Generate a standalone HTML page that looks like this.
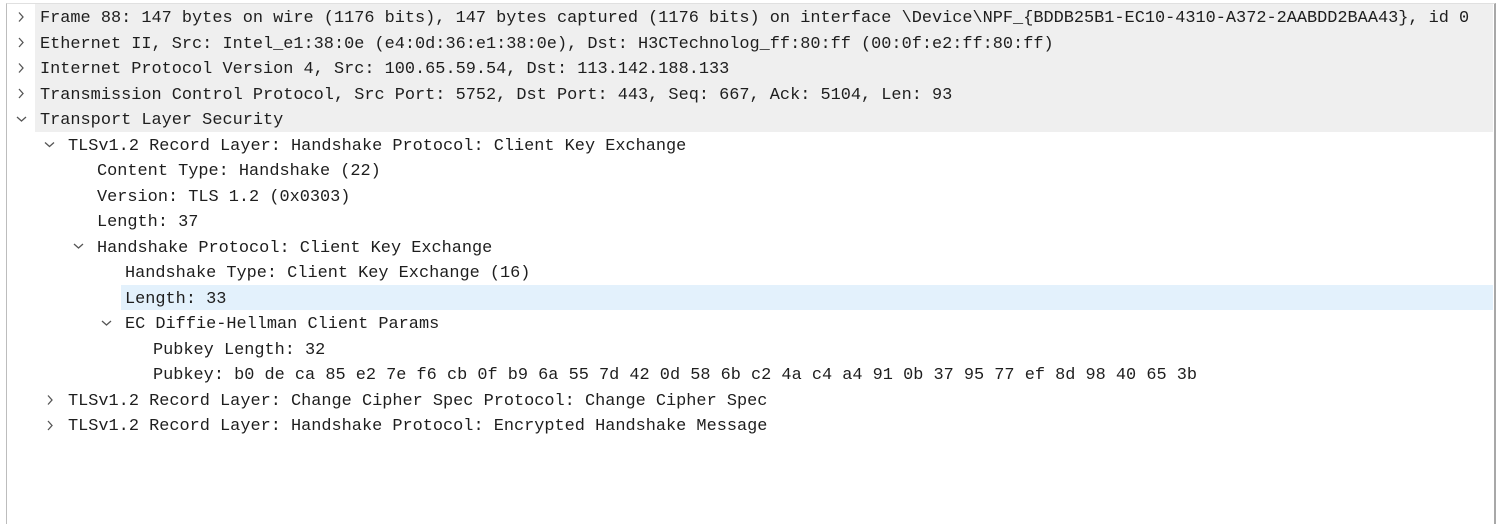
<!DOCTYPE html>
<html><head><meta charset="utf-8"><style>
body{margin:0;width:1496px;height:512px;background:#fff;overflow:hidden;position:relative;font-family:"Liberation Mono",monospace;}
.frame{position:absolute;left:6px;top:3px;width:1487px;height:520px;border-left:1px solid #bdbdbd;border-right:2px solid #a8a8a8;border-top:1px solid #e0e0e0;}
.r{position:absolute;height:25.5px;line-height:25.5px;font-size:16.9px;color:#1e1e1e;white-space:pre;}
.t{margin-top:2px;}
.g{background:#efefef;}
.h{background:#e3f1fc;}
</style></head><body>
<div class="frame"></div>
<div class="r g" style="left:35px;right:3px;top:4px"></div>
<div class="r g" style="left:35px;right:3px;top:29.5px"></div>
<div class="r g" style="left:35px;right:3px;top:55px"></div>
<div class="r g" style="left:35px;right:3px;top:80.5px"></div>
<div class="r g" style="left:35px;right:3px;top:106px"></div>
<div class="r h" style="left:121px;right:3px;top:284.5px"></div>

<div class="r t" style="left:40px;top:4px">Frame 88: 147 bytes on wire (1176 bits), 147 bytes captured (1176 bits) on interface \Device\NPF_{BDDB25B1-EC10-4310-A372-2AABDD2BAA43}, id 0</div>
<div class="r t" style="left:40px;top:29.5px">Ethernet II, Src: Intel_e1:38:0e (e4:0d:36:e1:38:0e), Dst: H3CTechnolog_ff:80:ff (00:0f:e2:ff:80:ff)</div>
<div class="r t" style="left:40px;top:55px">Internet Protocol Version 4, Src: 100.65.59.54, Dst: 113.142.188.133</div>
<div class="r t" style="left:40px;top:80.5px">Transmission Control Protocol, Src Port: 5752, Dst Port: 443, Seq: 667, Ack: 5104, Len: 93</div>
<div class="r t" style="left:40px;top:106px">Transport Layer Security</div>
<div class="r t" style="left:68px;top:131.5px">TLSv1.2 Record Layer: Handshake Protocol: Client Key Exchange</div>
<div class="r t" style="left:97px;top:157px">Content Type: Handshake (22)</div>
<div class="r t" style="left:97px;top:182.5px">Version: TLS 1.2 (0x0303)</div>
<div class="r t" style="left:97px;top:208px">Length: 37</div>
<div class="r t" style="left:97px;top:233.5px">Handshake Protocol: Client Key Exchange</div>
<div class="r t" style="left:125px;top:259px">Handshake Type: Client Key Exchange (16)</div>
<div class="r t" style="left:125px;top:284.5px">Length: 33</div>
<div class="r t" style="left:125px;top:310px">EC Diffie-Hellman Client Params</div>
<div class="r t" style="left:153px;top:335.5px">Pubkey Length: 32</div>
<div class="r t" style="left:153px;top:361px">Pubkey: b0 de ca 85 e2 7e f6 cb 0f b9 6a 55 7d 42 0d 58 6b c2 4a c4 a4 91 0b 37 95 77 ef 8d 98 40 65 3b</div>
<div class="r t" style="left:68px;top:386.5px">TLSv1.2 Record Layer: Change Cipher Spec Protocol: Change Cipher Spec</div>
<div class="r t" style="left:68px;top:412px">TLSv1.2 Record Layer: Handshake Protocol: Encrypted Handshake Message</div>

<svg width="1496" height="512" style="position:absolute;left:0;top:0" fill="none" stroke="#555" stroke-width="1.3">
<path d="M19 12.5l4 4.5-4 4.5"/>
<path d="M19 38l4 4.5-4 4.5"/>
<path d="M19 63.5l4 4.5-4 4.5"/>
<path d="M19 89l4 4.5-4 4.5"/>
<path d="M17 117l4.5 4 4.5-4"/>
<path d="M45 142.5l4.5 4 4.5-4"/>
<path d="M74 244l4.5 4 4.5-4"/>
<path d="M102 321l4.5 4 4.5-4"/>
<path d="M48 395.5l4 4.5-4 4.5"/>
<path d="M48 421l4 4.5-4 4.5"/>
</svg>
</body></html>
